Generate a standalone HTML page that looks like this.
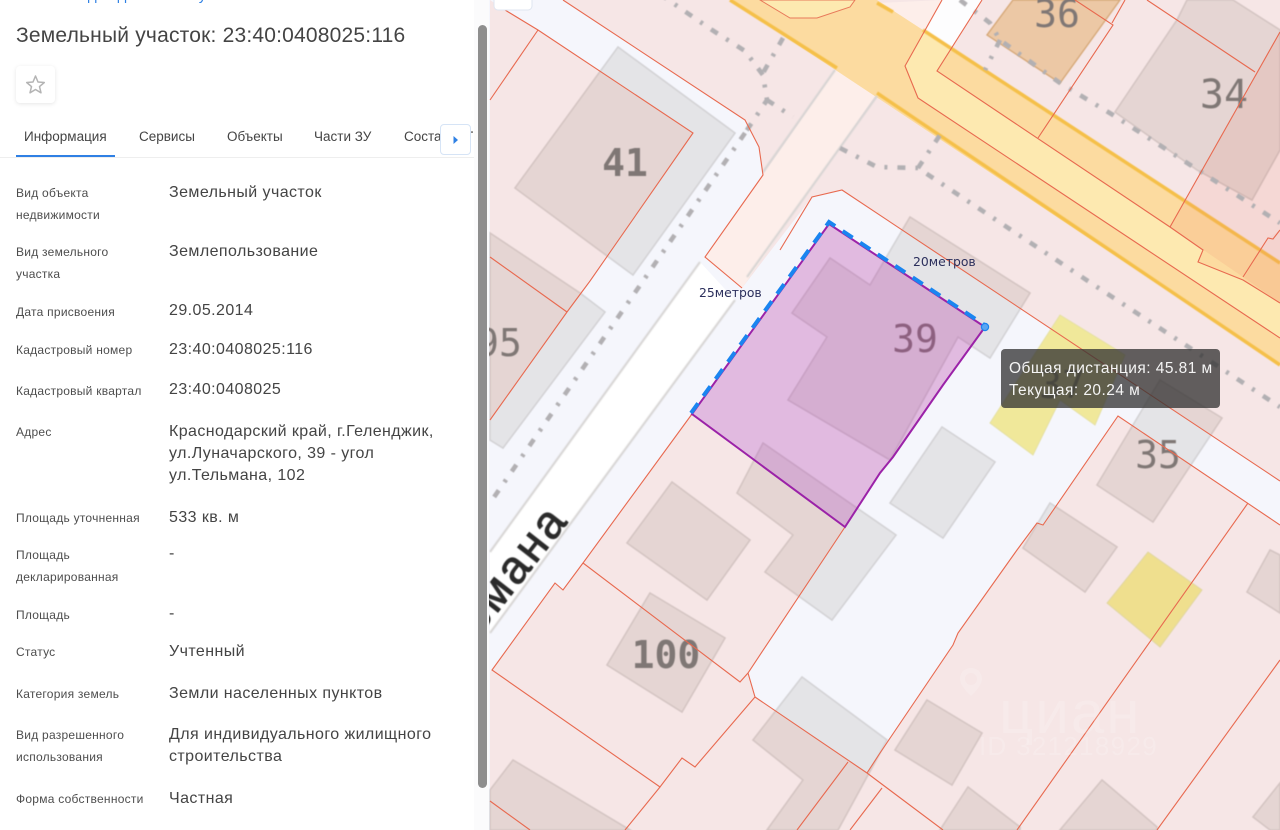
<!DOCTYPE html>
<html lang="ru">
<head>
<meta charset="utf-8">
<title>Земельный участок</title>
<style>
html,body{margin:0;padding:0;width:1280px;height:830px;overflow:hidden;background:#fff}
body{position:relative;font-family:"Liberation Sans","DejaVu Sans",sans-serif}
#map{position:absolute;left:0;top:0;width:1280px;height:830px}
#panel{position:absolute;left:0;top:0;width:489px;height:830px;background:#fff;overflow:hidden;color:#444}
#panel>div,#panel>span{position:absolute;white-space:nowrap}
.l{left:16px;font-size:12px;line-height:22px;height:22px;color:#4d4d4d;letter-spacing:.25px}
.v{left:169px;font-size:16px;line-height:22px;height:22px;color:#444;letter-spacing:.42px;margin-top:1px}
.t{top:128px;font-size:13.5px;line-height:18px;color:#444}
#tip{position:absolute;left:1001px;top:349px;width:219px;height:59px;background:rgba(50,50,50,.76);border-radius:4px;color:#f4f4f4;font-size:15.5px;line-height:22px}
#tip div{position:absolute;left:8px;white-space:nowrap;letter-spacing:.45px}
</style>
</head>
<body>
<svg id="map" viewBox="0 0 1280 830" xmlns="http://www.w3.org/2000/svg">
<defs>
<filter id="b" x="-5%" y="-5%" width="110%" height="110%"><feGaussianBlur stdDeviation=".8"/></filter>
<filter id="c" x="-5%" y="-5%" width="110%" height="110%"><feGaussianBlur stdDeviation=".6"/></filter>
</defs>
<rect width="1280" height="830" fill="#f5f6fc"/>
<!-- white road -->
<polygon points="700,262 735,300 490,633 490,552" fill="#fff"/>
<!-- pink parcels -->
<g fill="#f6e6e6">
<polygon points="490,0 505,10 538,30 693,133 567,312 490,420"/>
<polygon points="563,0 745,120 759,147 763,175 705,257 742,288 812,197 842,190 1280,481 1280,0"/>
<polygon points="692,414 845,527 748,673 755,697 867,773 880,753 953,645 958,633 1017,550 1037,523 1043,525 1118,416 1280,525 1280,830 490,830 490,672 555,583 563,590 583,563"/>
</g>
<polygon points="837,68 877,93 742,288 705,257 763,175" fill="#fdeeea"/>
<polygon points="877,3 942,0 925,31" fill="#fdeeea"/>
<polygon points="942,0 982,0 952,48 925,31" fill="#fdfdfe"/>
<!-- orange road -->
<polygon points="730,0 877,0 1280,263 1280,365" fill="#fcdba0"/>
<polygon points="760,0 790,18 817,18 850,7 855,0" fill="#fde9b0" stroke="#e8795a" stroke-width="1"/>
<polygon points="925,31 905,66 918,98 1280,338 1280,303 1243,280 1198,262 1203,250 937,71 952,48" fill="#fde9b0"/>
<g filter="url(#c)" stroke="#f5c04a" stroke-width="3.5" fill="none">
<line x1="730" y1="0" x2="837" y2="68"/>
<line x1="877" y1="93" x2="1280" y2="365"/>
<line x1="923" y1="30" x2="1280" y2="263"/>
<line x1="877" y1="3" x2="893" y2="12"/>
</g>
<polygon points="1280,32 1170,227 1243,277 1280,303" fill="#ef7a62" fill-opacity=".13"/>
<polygon points="1280,230 1268,238 1243,280 1280,303" fill="#ef7a62" fill-opacity=".05"/>
<!-- road edges -->
<g filter="url(#b)" stroke="#d5d3d2" stroke-width="2" fill="none">
<line x1="835" y1="70" x2="763" y2="172"/>
<line x1="877" y1="96" x2="747" y2="277"/>
<line x1="700" y1="262" x2="490" y2="552"/>
<line x1="735" y1="300" x2="490" y2="633"/>
</g>
<!-- buildings -->
<g filter="url(#c)" fill="#eeedea" stroke="#dcdad8" stroke-width="1.6" style="mix-blend-mode:multiply">
<polygon points="618,47 735,133 633,275 515,188"/>
<polygon points="490,233 580,293 605,312 503,448 490,440"/>
<polygon points="910,217 1030,293 990,358 958,337 890,460 788,400 827,337 792,313 830,258 870,285"/>
<polygon points="763,443 896,535 832,620 765,572 793,535 737,493"/>
<polygon points="672,482 750,540 707,600 627,543"/>
<polygon points="650,593 725,638 682,712 607,665"/>
<polygon points="802,677 887,740 838,830 767,830 803,780 753,740"/>
<polygon points="513,760 630,830 490,830 490,790"/>
<polygon points="942,427 995,462 943,538 890,503"/>
<polygon points="1160,380 1222,418 1153,522 1097,485"/>
<polygon points="1050,503 1117,547 1085,592 1023,548"/>
<polygon points="1270,550 1280,555 1280,613 1247,592"/>
<polygon points="927,700 982,733 952,785 895,750"/>
<polygon points="968,787 1020,827 1020,830 940,830"/>
<polygon points="1102,780 1157,827 1157,830 1060,830"/>
<polygon points="1280,783 1253,817 1270,830 1280,830"/>
<polygon points="1177,20 1187,0 1233,0 1280,30 1280,150 1252,200 1197,170 1115,112"/>
</g>
<polygon points="1013,0 1120,0 1060,83 987,35" fill="#ecc8a5" stroke="#d6a877" stroke-width="1.4" filter="url(#c)"/>
<polygon points="1060,315 1125,355 1095,425 1060,400 1033,455 990,423" fill="#f0e89a" stroke="#e5e0a4" stroke-width="1" filter="url(#c)"/>
<polygon points="1148,552 1202,590 1160,647 1107,603" fill="#efdf8e" stroke="#e0d6a2" stroke-width="1" filter="url(#c)"/>
<!-- dashed paths -->
<g filter="url(#c)" fill="none" stroke="#b2b0b3" stroke-width="4.6" stroke-dasharray="8 10 3 10">
<path d="M745,133 L490,503"/>
<path d="M660,-6 L680,8 L712,30 L745,51 L763,75 L767,100 L745,133"/>
<path d="M783,38 L763,73"/>
<path d="M767,100 L793,117"/>
<path d="M840,148 L877,167 L918,168 L1097,287 L1280,407"/>
<path d="M918,168 L940,135"/>
<path d="M960,0 L990,23 L1000,40 L1060,83 L1113,115 L1280,223"/>
<path d="M1000,40 L985,70"/>
</g>
<!-- house numbers -->
<g font-family="'DejaVu Sans Mono','Liberation Mono',monospace" font-size="38" fill="#7f7775" filter="url(#c)" text-anchor="middle">
<text x="1057" y="27">36</text>
<text x="1224" y="108" font-size="40">34</text>
<text x="625" y="176" font-weight="bold">41</text>
<text x="915" y="352">39</text>
<text x="1158" y="468">35</text>
<text x="499" y="356">95</text>
<text x="666" y="668" font-weight="bold">100</text>
<text x="1062" y="398" fill="#8f8a6a">37</text>
</g>
<!-- street name -->
<text transform="translate(570,520) rotate(-52)" text-anchor="end" font-family="'Liberation Sans',sans-serif" font-size="46" letter-spacing="3" fill="#2a2a2a" stroke="#2a2a2a" stroke-width=".9" filter="url(#c)">Тельмана</text>
<!-- cadastral lines -->
<g fill="none" stroke="#e8694f" stroke-width="1.1">
<polyline points="505,10 538,30 693,133 590,281 567,312 490,420"/>
<line x1="538" y1="30" x2="490" y2="100"/>
<line x1="490" y1="257" x2="567" y2="312"/>
<polyline points="563,0 745,120 759,147 763,175 705,257 742,288"/>
<polyline points="780,250 812,197 842,190 1280,481"/>
<polyline points="942,0 905,66 918,98 1280,338"/>
<polyline points="982,0 937,71 1170,227 1203,250 1198,262 1243,280 1280,303"/>
<polyline points="1075,0 1113,25 1038,138"/>
<line x1="1112" y1="23" x2="1125" y2="0"/>
<line x1="1147" y1="0" x2="1255" y2="72"/>
<line x1="1280" y1="32" x2="1170" y2="227"/>
<polyline points="1280,230 1273,239 1268,238 1243,277"/>
<polyline points="692,414 583,563 740,682 748,673 845,527"/>
<polyline points="583,563 563,590 555,583 492,670 660,787 682,758 695,767 755,697 748,673"/>
<line x1="660" y1="787" x2="625" y2="830"/>
<line x1="490" y1="801" x2="530" y2="830"/>
<polyline points="755,697 867,773 943,830"/>
<line x1="848" y1="762" x2="797" y2="830"/>
<line x1="882" y1="788" x2="850" y2="830"/>
<polyline points="867,773 880,753 953,645 958,633 1017,550 1037,523 1043,525 1118,416 1280,525"/>
<line x1="1248" y1="503" x2="1017" y2="830"/>
<line x1="1280" y1="660" x2="1157" y2="830"/>
</g>
<!-- measured polygon -->
<polygon points="829,224 985,327 943,385 893,457 880,473 845,527 692,414" fill="#b0289c" fill-opacity=".29" stroke="#9b22a8" stroke-width="2"/>
<polyline points="691,413 829,222 986,326" fill="none" stroke="#1a85f0" stroke-width="4" stroke-dasharray="12 9"/>
<circle cx="985" cy="327" r="3.6" fill="#5aa5f2" stroke="#1a85f0" stroke-width="1.2"/>
<g font-family="'DejaVu Sans',sans-serif" font-size="12.4" fill="#2b2f5c">
<text x="913" y="266">20метров</text>
<text x="699" y="297">25метров</text>
</g>
<!-- watermark -->
<g fill="#fff" fill-opacity=".16">
<path fill-rule="evenodd" d="M971,668c-7,0-11,5-11,11c0,6,7,13,11,17c4-4,11-11,11-17c0-6-4-11-11-11zm0,5a6,6 0 1 1 0,12a6,6 0 1 1 0,-12z"/>
<text x="999" y="733" font-family="'Liberation Sans',sans-serif" font-size="60" letter-spacing="2">циан</text>
<text x="979" y="755" font-family="'Liberation Sans',sans-serif" font-size="26" letter-spacing="1.3">ID 321218929</text>
</g>
<!-- map control -->
<rect x="494" y="-10" width="38" height="20" rx="4" fill="#fff" stroke="#dfe5f0"/>
</svg>

<div id="tip">
<div style="top:9px">Общая дистанция: 45.81 м</div>
<div style="top:31px">Текущая: 20.24 м</div>
</div>

<div id="panel">
<div style="left:60px;top:-13px;font-size:15px;line-height:18px;color:#2f80e4;letter-spacing:.4px">Сводка данных об участке</div>
<div style="left:16px;top:24px;font-size:21px;line-height:24px;color:#444;letter-spacing:.2px">Земельный участок: 23:40:0408025:116</div>
<div style="left:16px;top:66px;width:39px;height:37px;background:#fff;border-radius:4px;box-shadow:0 1px 4px rgba(0,0,0,.1)">
<svg width="39" height="37" viewBox="0 0 39 37" style="position:absolute;left:0;top:0"><polygon points="19.5,10 22,16 28.3,16.5 23.5,20.6 25,26.8 19.5,23.5 14,26.8 15.5,20.6 10.7,16.5 17,16" fill="none" stroke="#b4b4b4" stroke-width="1.5" stroke-linejoin="round"/></svg>
</div>
<span class="t" style="left:24px">Информация</span>
<span class="t" style="left:139px">Сервисы</span>
<span class="t" style="left:227px">Объекты</span>
<span class="t" style="left:314px">Части ЗУ</span>
<span class="t" style="left:404px;width:69px;overflow:hidden;word-spacing:15px">Состав П</span>
<div style="left:0;top:157px;width:474px;height:1px;background:#eee"></div>
<div style="left:16px;top:155px;width:99px;height:2px;background:#2f80e4"></div>
<div style="left:440px;top:124px;width:29px;height:29px;background:#fff;border:1px solid #d6e4f6;border-radius:4px">
<svg width="29" height="29" viewBox="0 0 29 29" style="position:absolute;left:0;top:0"><polygon points="12.5,11 17,15 12.5,19" fill="#2f80e4"/></svg>
</div>

<span class="l" style="top:182px">Вид объекта</span><span class="l" style="top:204px">недвижимости</span>
<span class="v" style="top:181px">Земельный участок</span>
<span class="l" style="top:241px">Вид земельного</span><span class="l" style="top:263px">участка</span>
<span class="v" style="top:240px">Землепользование</span>
<span class="l" style="top:301px">Дата присвоения</span>
<span class="v" style="top:299px">29.05.2014</span>
<span class="l" style="top:339px">Кадастровый номер</span>
<span class="v" style="top:338px">23:40:0408025:116</span>
<span class="l" style="top:380px">Кадастровый квартал</span>
<span class="v" style="top:378px">23:40:0408025</span>
<span class="l" style="top:421px">Адрес</span>
<span class="v" style="top:420px">Краснодарский край, г.Геленджик,</span>
<span class="v" style="top:442px">ул.Луначарского, 39 - угол</span>
<span class="v" style="top:464px">ул.Тельмана, 102</span>
<span class="l" style="top:507px">Площадь уточненная</span>
<span class="v" style="top:506px">533 кв. м</span>
<span class="l" style="top:544px">Площадь</span><span class="l" style="top:566px">декларированная</span>
<span class="v" style="top:542px">-</span>
<span class="l" style="top:604px">Площадь</span>
<span class="v" style="top:602px">-</span>
<span class="l" style="top:641px">Статус</span>
<span class="v" style="top:640px">Учтенный</span>
<span class="l" style="top:683px">Категория земель</span>
<span class="v" style="top:682px">Земли населенных пунктов</span>
<span class="l" style="top:724px">Вид разрешенного</span><span class="l" style="top:746px">использования</span>
<span class="v" style="top:723px">Для индивидуального жилищного</span>
<span class="v" style="top:745px">строительства</span>
<span class="l" style="top:788px">Форма собственности</span>
<span class="v" style="top:787px">Частная</span>

<div style="left:474px;top:0;width:15px;height:830px;background:#fbfbfc"></div>
<div style="left:478px;top:25px;width:9px;height:763px;background:#8e8e8e;border-radius:5px"></div>
</div>
</body>
</html>
